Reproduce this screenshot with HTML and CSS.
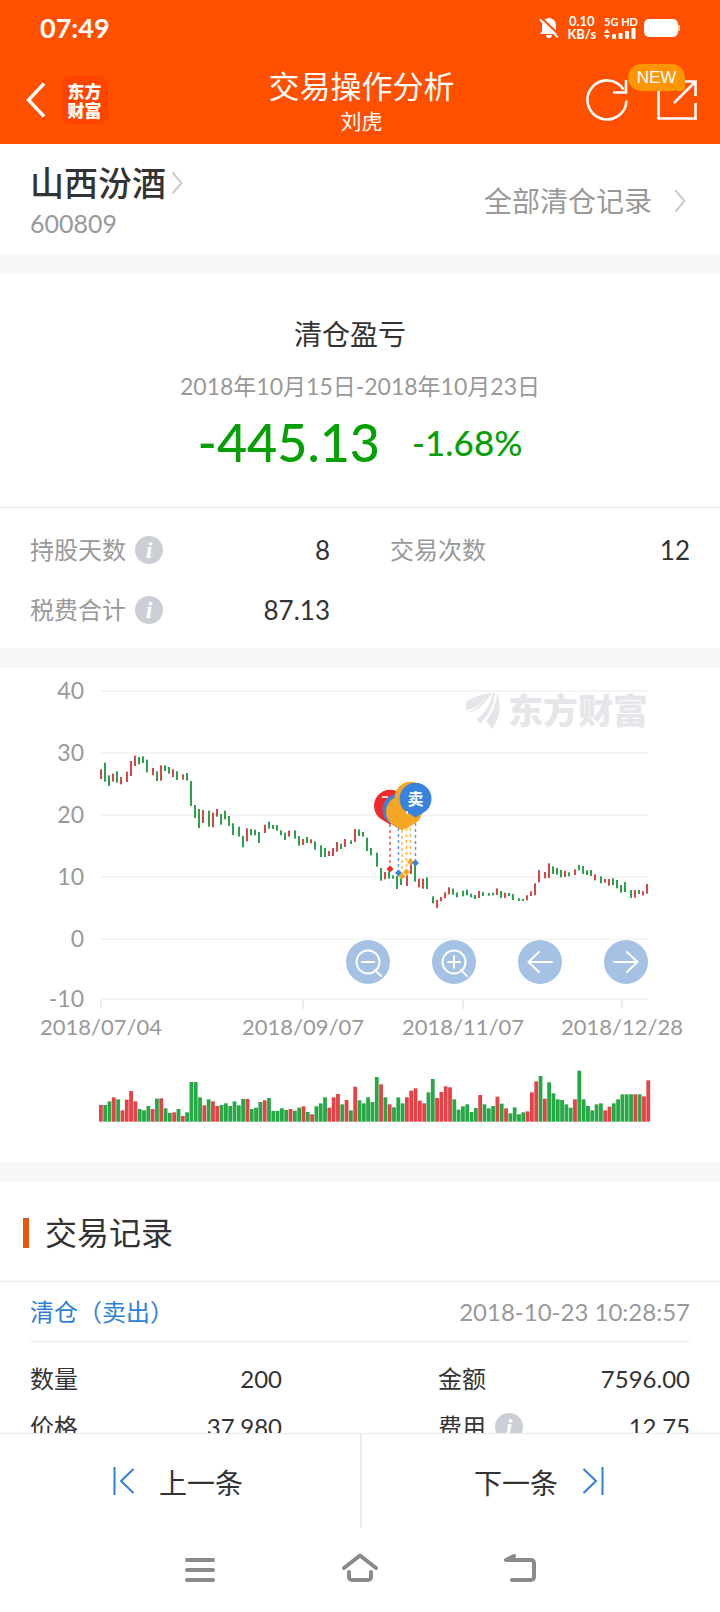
FILE: index.html
```html
<!DOCTYPE html>
<html lang="zh-CN">
<head>
<meta charset="utf-8">
<meta name="viewport" content="width=device-width, initial-scale=1">
<title>交易操作分析</title>
<link rel="stylesheet" href="styles.css">
</head>
<body>
<header class="top">
  <div class="status">
    <span class="clock">07:49</span>
    <div class="status-icons">
      <svg class="bell" width="20" height="22" viewBox="0 0 20 22" aria-hidden="true"><path d="M10 1a7 7 0 0 0-7 7v6l-2 3h18l-2-3V8a7 7 0 0 0-7-7zM7 18a3 3 0 0 0 6 0z" fill="#fff"/><path d="M2 0.500L21 18.500" stroke="#ff5000" stroke-width="2"/><path d="M1 2.500L19 20.500" stroke="#fff" stroke-width="2"/></svg>
      <div class="speed"><span>0.10</span><span>KB/s</span></div>
      <div class="network">
        <span class="net-label">5G HD</span>
        <svg width="32" height="12" viewBox="0 0 32 12" fill="#fff" aria-hidden="true"><path d="M0 5l3-4 3 4zM0 7l3 4 3-4z"/><rect x="8" y="6" width="4" height="5" rx="1"/><rect x="14.500" y="5" width="4" height="6" rx="1"/><rect x="21" y="3" width="4" height="8" rx="1"/><rect x="27.500" y="0" width="4" height="11" rx="1"/></svg>
      </div>
      <svg width="36" height="18" viewBox="0 0 36 18" fill="#fff" aria-hidden="true"><rect width="34" height="18" rx="5"/><rect x="33" y="6" width="3" height="6" rx="1" opacity=".7"/></svg>
    </div>
  </div>
  <div class="titlebar">
    <div class="title-side">
      <button class="icon-btn" aria-label="返回"><svg width="20" height="36" viewBox="0 0 20 36"><path d="M18 1.500L2.500 18L18 34.500" fill="none" stroke="#fff" stroke-width="3.400"/></svg></button>
      <div class="app-logo"><span>东方</span><span>财富</span></div>
    </div>
    <div class="title-text">
      <h1>交易操作分析</h1>
      <p>刘虎</p>
    </div>
    <div class="title-side title-actions">
      <button class="icon-btn" aria-label="刷新"><svg width="44" height="44" viewBox="0 0 44 44" fill="none" stroke="#fff" stroke-width="2.600"><path d="M41.500 22.500A19.500 19.500 0 1 1 38.500 11.500"/><path d="M28 14.500H41V2"/></svg></button>
      <button class="icon-btn share" aria-label="分享"><svg width="40" height="40" viewBox="0 0 40 40" fill="none" stroke="#fff" stroke-width="2.600"><path d="M1.500 8V38.500H38.500V23"/><path d="M24 1.500H38.500V16M38 2L17 23"/></svg><span class="badge">NEW</span></button>
    </div>
  </div>
</header>

<main class="content">
  <section class="stock">
    <div>
      <a class="stock-name" href="#stock">山西汾酒<svg width="12" height="24" viewBox="0 0 12 24"><path d="M1.500 1.500L10.500 12L1.500 22.500" fill="none" stroke="#ccc" stroke-width="2"/></svg></a>
      <p class="stock-code">600809</p>
    </div>
    <a class="all-records" href="#all">全部清仓记录<svg width="12" height="24" viewBox="0 0 12 24"><path d="M1.500 1.500L10.500 12L1.500 22.500" fill="none" stroke="#ccc" stroke-width="2"/></svg></a>
  </section>

  <section class="panel">
    <div class="profit">
      <h2>清仓盈亏</h2>
      <p class="period">2018年10月15日-2018年10月23日</p>
      <p class="result"><span class="amount">-445.13</span><span class="percent">-1.68%</span></p>
    </div>
    <dl class="stats">
      <div class="stat"><dt>持股天数<button class="info" aria-label="持股天数说明">i</button></dt><dd>8</dd></div>
      <div class="stat"><dt>交易次数</dt><dd>12</dd></div>
      <div class="stat"><dt>税费合计<button class="info" aria-label="税费合计说明">i</button></dt><dd>87.13</dd></div>
    </dl>
  </section>

  <section class="panel chart">
    <svg id="chart" class="chart-svg" viewBox="0 0 720 494" role="img" aria-label="价格与成交量走势"></svg>
    <div class="chart-tools">
      <button class="tool" aria-label="缩小"><svg viewBox="0 0 44 44"><circle cx="22" cy="22" r="11.500"/><path d="M16 22h12M29 30l6 6"/></svg></button>
      <button class="tool" aria-label="放大"><svg viewBox="0 0 44 44"><circle cx="22" cy="22" r="11.500"/><path d="M16 22h12M22 16v12M29 30l6 6"/></svg></button>
      <button class="tool" aria-label="左移"><svg viewBox="0 0 44 44"><path d="M34 22H10.500M21 12L10.500 22L21 32"/></svg></button>
      <button class="tool" aria-label="右移"><svg viewBox="0 0 44 44"><path d="M10 22h23.500M23 12l10.500 10L23 32"/></svg></button>
    </div>
  </section>

  <section class="panel">
    <h2 class="records-title">交易记录</h2>
    <div class="record">
      <div class="record-head"><span class="record-type">清仓（卖出）</span><time>2018-10-23 10:28:57</time></div>
      <dl class="record-body">
        <div class="field"><dt>数量</dt><dd>200</dd></div>
        <div class="field"><dt>金额</dt><dd>7596.00</dd></div>
        <div class="field"><dt>价格</dt><dd>37.980</dd></div>
        <div class="field"><dt>费用<button class="info" aria-label="费用说明">i</button></dt><dd>12.75</dd></div>
      </dl>
    </div>
  </section>
</main>

<nav class="pager">
  <button class="page-btn"><svg width="22" height="28" viewBox="0 0 22 28"><path d="M1.500 0V28M20.500 2L8 14L20.500 26"/></svg><span>上一条</span></button>
  <button class="page-btn"><span>下一条</span><svg width="22" height="28" viewBox="0 0 22 28"><path d="M20.500 0V28M1.500 2L14 14L1.500 26"/></svg></button>
</nav>
<footer class="system-nav">
  <button class="icon-btn" aria-label="菜单"><svg width="36" height="36" viewBox="0 0 36 36"><path d="M5 8H31M5 18H31M5 28H31"/></svg></button>
  <button class="icon-btn" aria-label="主页"><svg width="40" height="36" viewBox="0 0 40 36"><path d="M4 16L20 3.500L36 16M9 20V25a3 3 0 0 0 3 3H28a3 3 0 0 0 3-3V20"/></svg></button>
  <button class="icon-btn" aria-label="后退"><svg width="36" height="36" viewBox="0 0 36 36"><path d="M12 4L4 8H29a3 3 0 0 1 3 3V25a3 3 0 0 1-3 3H10"/></svg></button>
</footer>
<script src="chart.js"></script>
</body>
</html>
```

FILE: styles.css
```css
* { box-sizing: border-box; margin: 0; padding: 0; }

body {
  display: flex;
  flex-direction: column;
  height: 100vh;
  background: #fff;
  color: #333;
  font-family: Lato, "Noto Sans CJK SC", sans-serif;
  font-size: 24px;
  line-height: 36px;
}

button { border: 0; background: none; font: inherit; color: inherit; }
a { color: inherit; text-decoration: none; }
h1, h2 { font-weight: 400; }
svg { display: block; flex: none; }

.top { flex: none; background: #ff5000; color: #fff; }
.status {
  display: flex;
  justify-content: space-between;
  align-items: center;
  height: 56px;
  padding: 0 40px;
}
.clock { font-size: 27px; font-weight: 700; }
.status-icons { display: flex; align-items: center; gap: 8px; }
.speed { display: grid; font-size: 13px; line-height: 13px; font-weight: 700; text-align: center; }
.network { display: flex; flex-direction: column; gap: 1px; margin-right: -2px; }
.net-label { font-size: 11px; line-height: 11px; font-weight: 700; white-space: nowrap; }

.titlebar {
  display: grid;
  grid-template-columns: 1fr auto 1fr;
  align-items: center;
  height: 88px;
  padding: 0 23px 0 26px;
}
.title-side { display: flex; align-items: center; gap: 15px; }
.title-actions { justify-content: flex-end; gap: 28px; }
.icon-btn { display: block; position: relative; }
.app-logo {
  display: grid;
  align-content: center;
  width: 47px;
  height: 48px;
  border-radius: 10px;
  background: #ff4400;
  font: 900 17px/19px "Noto Sans CJK SC", sans-serif;
  text-align: center;
}
.title-text { text-align: center; padding-top: 4px; }
.title-text h1 { font-size: 31px; line-height: 38px; }
.title-text p { font-size: 21px; line-height: 32px; }
.badge {
  position: absolute;
  right: 12px;
  top: -16px;
  width: 57px;
  border-radius: 14px 14px 4px 14px;
  background: #ff9500;
  font: 17px/27px "Liberation Sans", sans-serif;
  text-align: center;
}

.content { flex: 1; min-height: 0; overflow: hidden; }
.panel { border-top: 20px solid #f7f7f7; }

.stock {
  display: flex;
  justify-content: space-between;
  align-items: center;
  min-height: 110px;
  padding: 4px 30px 0;
}
.stock-name { display: flex; align-items: center; gap: 5px; font-size: 34px; line-height: 44px; font-weight: 500; }
.stock-code { font-size: 25px; color: #999; }
.all-records { display: flex; align-items: center; gap: 22px; padding-right: 4px; font-size: 28px; color: #999; }

.profit { padding: 42px 30px 33px; text-align: center; border-bottom: 1px solid #ebebeb; }
.profit h2 { font-size: 28px; padding-right: 20px; }
.period { margin-top: 16px; font-size: 23px; color: #999; }
.result { display: flex; justify-content: center; align-items: center; gap: 32px; margin-top: 6px; line-height: 64px; color: #05a005; font-weight: 500; }
.amount { font-size: 52px; }
.percent { font-size: 35px; }

.stats { display: grid; grid-template-columns: 1fr 1fr; gap: 0 60px; padding: 12px 30px 8px; }
.stat { display: flex; justify-content: space-between; align-items: center; height: 60px; }
.stat dt { display: flex; align-items: center; gap: 9px; color: #999; }
.stat dd { font-size: 26px; }
.info {
  width: 28px;
  height: 28px;
  border-radius: 50%;
  background: #cbced4;
  color: #fff;
  font: italic 700 24px/28px "Liberation Serif", serif;
  text-align: center;
}

.chart { position: relative; }
.chart-svg { width: 100%; height: auto; }
.axis { fill: #999; font-size: 23px; }
.date { font-size: 22px; }
.grid { stroke: #f5f5f5; stroke-width: 2; }
.tick { stroke: #ebebeb; stroke-width: 2; }
.up { fill: #d9464a; }
.down { fill: #2ca14c; }
.vol-up { fill: #e54247; }
.vol-down { fill: #26a846; }
.mark { fill: #e6e6ea; }
.mark-text { font: 900 35px "Noto Sans CJK SC", sans-serif; }
.pin-text { fill: #fff; font: 700 16px "Noto Sans CJK SC", sans-serif; text-anchor: middle; }
.chart-tools {
  position: absolute;
  left: 48%;
  right: 10%;
  top: 55%;
  display: flex;
  justify-content: space-between;
}
.tool { width: 44px; height: 44px; border-radius: 50%; background: #a5c2e4; }
.tool svg { fill: none; stroke: #fff; stroke-width: 2; stroke-linecap: round; }

.records-title {
  display: flex;
  align-items: center;
  gap: 16px;
  padding: 27px 23px 24px;
  border-bottom: 1px solid #ebebeb;
  font-size: 32px;
  line-height: 48px;
}
.records-title::before { content: ""; width: 6px; height: 30px; background: #e4570c; }
.record { padding: 0 30px; }
.record-head { display: flex; justify-content: space-between; align-items: center; height: 60px; border-bottom: 1px solid #ebebeb; }
.record-type { color: #2f7fd6; }
.record-head time { color: #999; }
.record-body { display: grid; grid-template-columns: 252px 252px; justify-content: space-between; padding: 13px 0; }
.field { display: flex; justify-content: space-between; align-items: center; height: 48px; }
.field dt { display: flex; align-items: center; gap: 9px; }

.pager { flex: none; display: grid; grid-template-columns: 1fr 1fr; background: #fff; border-top: 1px solid #ebebeb; }
.page-btn { display: flex; justify-content: center; align-items: center; gap: 24px; height: 94px; padding-right: 4px; font-size: 28px; }
.page-btn span { padding-top: 3px; }
.page-btn + .page-btn { border-left: 2px solid #ebebeb; }
.page-btn svg { fill: none; stroke: #2f7fd6; stroke-width: 2; }
.system-nav { flex: none; display: flex; justify-content: space-between; align-items: center; height: 84px; padding: 0 182px; }
.system-nav svg { fill: none; stroke: #8a8a8a; stroke-width: 4; stroke-linecap: round; stroke-linejoin: round; }
```

FILE: chart.js
```js
// Each candle is x, top, bottom in thirds of a unit; "r" closes up, "g" closes down.
const candles = `303 298 327 r;315 278 335 g;327 316 348 g;339 311 335 r;351 304 338 g;363 321 343 r;381 305 336 r;393 273 318 r;405 257 288 r;417 261 283 g;429 259 279 g;441 269 307 g;459 294 316 r;471 304 333 g;483 286 332 r;495 286 303 g;507 291 311 g;519 298 321 r;531 304 330 g;549 313 329 r;561 309 332 g;573 333 408 g;585 405 444 g;597 417 474 g;609 420 459 r;627 422 470 g;639 428 472 r;651 417 440 r;663 432 464 g;675 422 448 g;687 438 468 g;699 460 495 g;717 470 500 g;729 498 532 g;741 475 514 r;753 477 496 g;765 479 496 g;777 486 519 g;795 464 489 r;807 455 476 g;819 465 477 g;831 465 482 g;843 481 496 g;855 488 510 g;867 482 500 r;885 481 506 g;897 498 527 g;909 507 525 r;921 501 519 g;933 508 520 r;945 514 539 g;963 526 561 g;975 534 561 g;987 543 558 r;999 534 558 r;1011 516 545 r;1023 521 537 g;1035 507 531 r;1053 511 522 g;1065 477 516 r;1077 478 498 g;1089 486 500 g;1101 503 543 g;1113 534 556 g;1131 548 590 g;1143 594 632 g;1155 606 628 r;1167 604 626 g;1179 616 626 g;1191 618 657 g;1203 625 645 g;1221 616 648 r;1233 580 612 r;1245 580 635 g;1257 626 652 r;1269 626 656 r;1281 622 657 g;1299 679 700 g;1311 690 714 r;1323 681 694 r;1335 667 685 r;1347 652 673 r;1359 656 674 g;1371 667 682 g;1389 662 679 g;1401 659 676 g;1413 671 682 g;1425 675 687 g;1437 663 684 r;1449 666 678 g;1467 669 677 g;1479 668 676 g;1491 655 675 r;1503 663 684 g;1515 668 684 r;1527 669 678 g;1539 672 690 g;1557 685 693 g;1569 687 693 g;1581 676 691 r;1593 664 678 r;1605 640 676 r;1617 600 637 r;1635 606 625 r;1647 580 624 r;1659 589 612 g;1671 594 614 g;1683 600 622 g;1695 602 621 r;1707 607 619 g;1725 598 615 r;1737 585 601 g;1749 588 612 g;1761 601 615 g;1773 600 618 g;1785 613 631 r;1803 619 640 g;1815 627 638 r;1827 627 647 r;1839 625 645 g;1851 630 655 g;1863 645 668 g;1875 636 666 g;1893 660 684 g;1905 660 683 r;1917 660 672 g;1929 664 676 r;1941 642 671 r`;

// Volume bar tops on the same scale; the base line is 245.
const volumes = `195r,195g,184g,172r,178g,211r,179r,153r,184r,207g,211g,198g,207r,176g,175r,205g,219g,217r,207g,228r,217g,126g,126g,172g,196r,178g,184r,198r,195g,190g,198g,184g,196g,177g,177r,207g,203g,186g,181r,174g,213g,213g,205g,210g,207r,212g,203g,199r,216g,223r,199g,190g,172g,203r,172r,162r,193g,180r,211g,140r,181g,190g,172g,186g,111g,133r,172g,193r,202g,172g,190g,172r,152r,145r,182r,190r,157g,117g,174r,156r,139r,142r,178g,209g,199g,193g,216g,204g,165r,193g,205g,198g,170r,191g,205r,220g,202g,223g,217g,214r,157r,124r,108g,176r,127g,160g,178g,180g,193g,203g,178r,92g,178g,198g,211g,193g,190g,211r,200r,190g,178g,163g,163g,163g,163r,163g,169r,121r`;

const RED = "#ee2a2a", BLUE = "#3783de", ORANGE = "#f5a623";
const parts = [];

[[40, 23], [30, 85], [20, 147], [10, 209], [0, 271], [-10, 331]].forEach(([label, y]) => {
  parts.push(`<line class="grid" x1="101" x2="648" y1="${y}" y2="${y}"/>`);
  parts.push(`<text class="axis" x="84" y="${y + 8}" text-anchor="end">${label}</text>`);
});
[["2018/07/04", 101], ["2018/09/07", 303], ["2018/11/07", 463], ["2018/12/28", 622]].forEach(([label, x]) => {
  parts.push(`<line class="tick" x1="${x}" x2="${x}" y1="332" y2="341"/>`);
  parts.push(`<text class="axis date" x="${x}" y="367" text-anchor="middle">${label}</text>`);
});

parts.push(`<g class="mark"><path d="M466 34C474 28 484 26 492 25C486 33 478 45 468 44C475 42 482 35 486 30C480 36 473 42 466 42Z"/><path d="M493 25C490 38 484 46 477 51L480 56C488 48 494 38 495 25Z"/><path d="M497 25C502 37 500 50 492 61L486 53C492 46 496 37 497 25Z"/><text class="mark-text" x="508" y="56">东方财富</text></g>`);

candles.split(";").forEach(row => {
  const [x, top, bottom, kind] = row.trim().split(" ");
  parts.push(`<rect class="${kind === "r" ? "up" : "down"}" x="${x / 3 - 1}" y="${top / 3 + 2}" width="2" height="${(bottom - top) / 3}"/>`);
});

volumes.split(",").forEach((item, i) => {
  const top = parseInt(item, 10);
  const kind = item.endsWith("r") ? "vol-up" : "vol-down";
  parts.push(`<rect class="${kind}" x="${99 + i * 4.31}" y="${top / 3 + 372}" width="3.8" height="${(245 - top) / 3}"/>`);
});

const pins = [
  [390, 138, 201, RED, ""], [398.5, 142, 205, BLUE, ""], [410.5, 130, 194, ORANGE, ""],
  [406.5, 142, 204, ORANGE, ""], [402, 144, 208, ORANGE, ""], [415.5, 131, 195, BLUE, "卖"]
];
pins.forEach(([x, y, end, color]) => {
  parts.push(`<line x1="${x}" x2="${x}" y1="${y}" y2="${end}" stroke="${color}" stroke-width="1.500" stroke-dasharray="3 3" opacity=".8"/>`);
  parts.push(`<path d="M${x} ${end - 3.5}l3.500 3.500l-3.500 3.500l-3.500-3.500z" fill="${color}"/>`);
});
pins.forEach(([x, y, , color, label]) => {
  parts.push(`<path d="M${x} ${y + 18.500}L${x - 9} ${y + 13}A16 16 0 1 1 ${x + 9} ${y + 13}Z" fill="${color}"/>`);
  if (label) parts.push(`<text class="pin-text" x="${x}" y="${y + 6}">${label}</text>`);
});
parts.push(`<path d="M382 129h6M406 144h2M407 144v2" stroke="#fff" stroke-width="1.500"/>`);

document.getElementById("chart").innerHTML = parts.join("");
```
